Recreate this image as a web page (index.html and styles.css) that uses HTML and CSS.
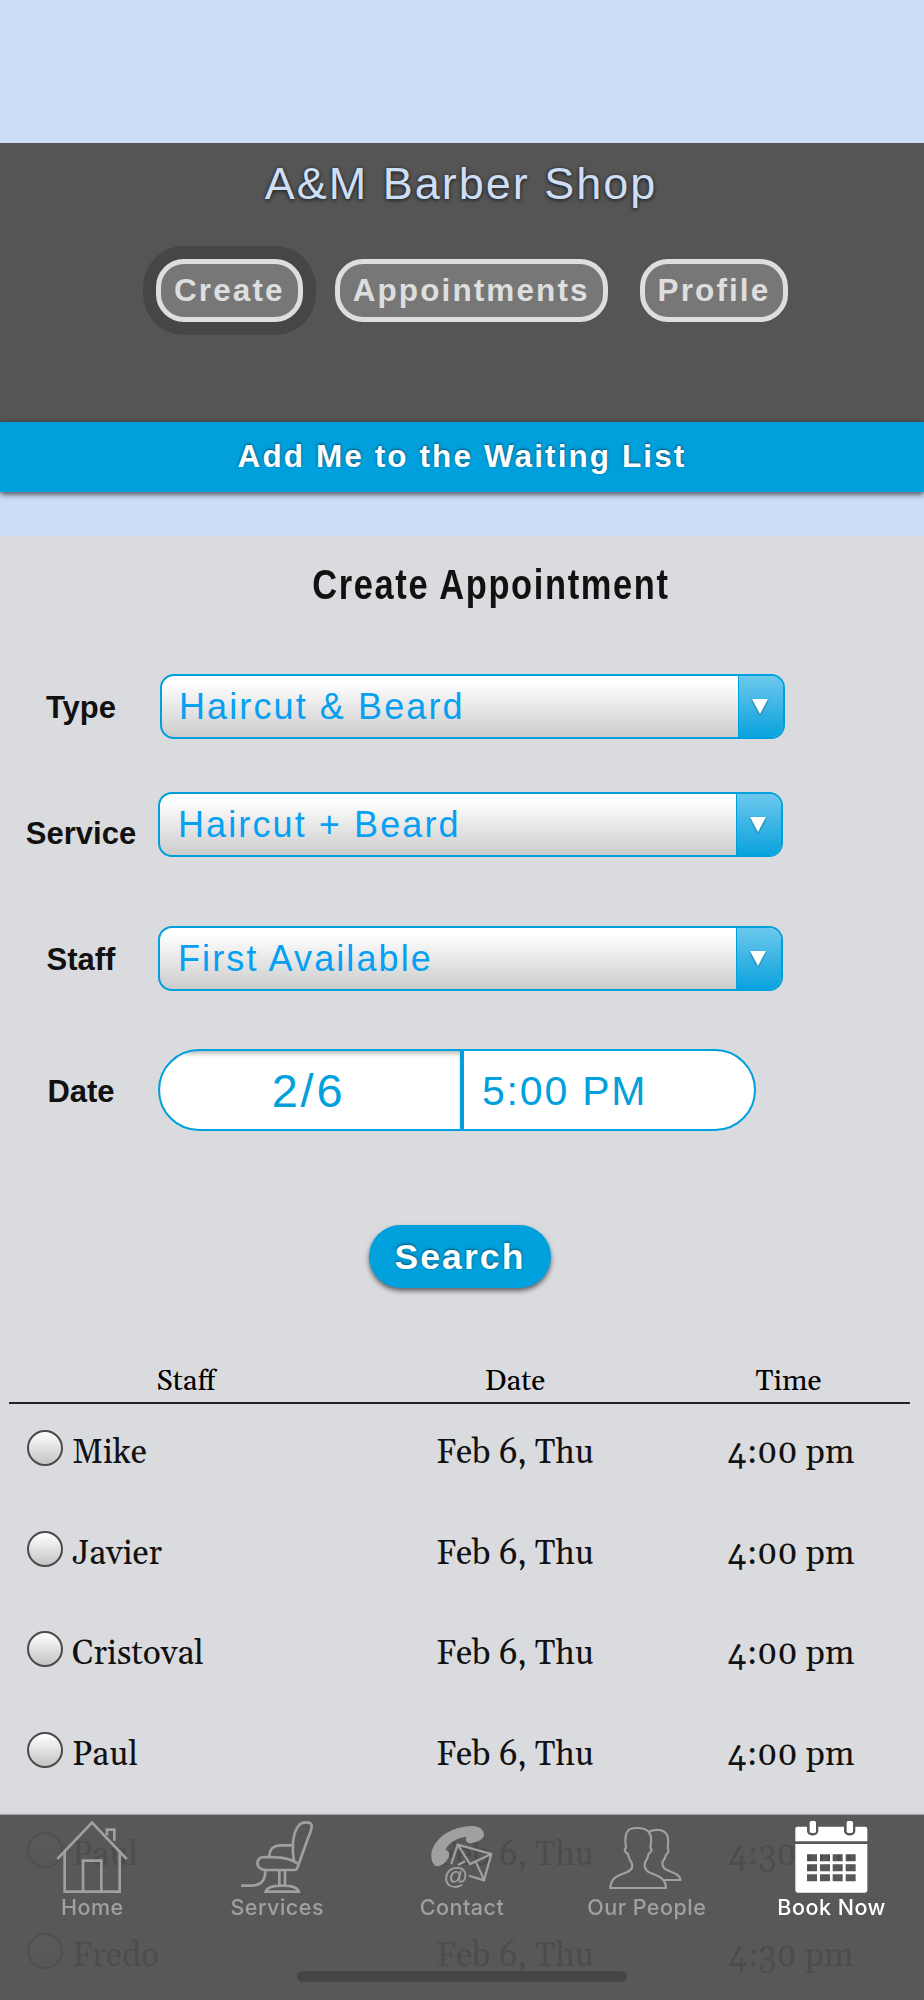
FILE: index.html
```html
<!DOCTYPE HTML>
<html>
<head>
<meta charset="utf-8">
<title>A&amp;M Barber Shop</title>
<meta name="viewport" content="width=device-width, initial-scale=1">
<link rel="stylesheet" href="styles.css">
</head>
<body>

<div class="header">
	<h1>A&amp;M Barber Shop</h1>
	<div class="nav">
		<a class="nav-btn active">Create</a>
		<a class="nav-btn">Appointments</a>
		<a class="nav-btn">Profile</a>
	</div>
</div>
<a class="waiting">Add Me to the Waiting List</a>

<div class="content">
	<h2><span>Create Appointment</span></h2>

	<div class="row type">
		<label>Type</label>
		<div class="select"><span>Haircut &amp; Beard</span><i><svg width="16" height="16" viewBox="0 0 16 16"><path d="M0 0H16L8 15Z" fill="#fff"/></svg></i></div>
	</div>
	<div class="row service">
		<label>Service</label>
		<div class="select"><span>Haircut + Beard</span><i><svg width="16" height="16" viewBox="0 0 16 16"><path d="M0 0H16L8 15Z" fill="#fff"/></svg></i></div>
	</div>
	<div class="row staff">
		<label>Staff</label>
		<div class="select"><span>First Available</span><i><svg width="16" height="16" viewBox="0 0 16 16"><path d="M0 0H16L8 15Z" fill="#fff"/></svg></i></div>
	</div>
	<div class="row date">
		<label>Date</label>
		<div class="pill"><span class="day">2/6</span><span class="time">5:00 PM</span></div>
	</div>

	<a class="search">Search</a>

	<div class="results">
		<div class="line head"><span>Staff</span><span>Date</span><span>Time</span></div>
		<div class="line"><span class="who"><b class="radio"></b>Mike</span><span>Feb 6, Thu</span><span>4:00 pm</span></div>
		<div class="line"><span class="who"><b class="radio"></b>Javier</span><span>Feb 6, Thu</span><span>4:00 pm</span></div>
		<div class="line"><span class="who"><b class="radio"></b>Cristoval</span><span>Feb 6, Thu</span><span>4:00 pm</span></div>
		<div class="line"><span class="who"><b class="radio"></b>Paul</span><span>Feb 6, Thu</span><span>4:00 pm</span></div>
		<div class="line"><span class="who"><b class="radio"></b>Paul</span><span>Feb 6, Thu</span><span>4:30 pm</span></div>
		<div class="line"><span class="who"><b class="radio"></b>Fredo</span><span>Feb 6, Thu</span><span>4:30 pm</span></div>
	</div>
</div>

<div class="tabbar">
	<a class="tab">
		<svg viewBox="163 57 228 228">
			<path d="M173 177L277 68L381 177M322 106V89H344V122M195 155V275H360V155M250 273V182H305V273"/>
		</svg>
		Home
	</a>
	<a class="tab">
		<svg viewBox="718 57 228 228">
			<path d="M883 186C877 150 877 103 896 78C907 64 933 64 936 76C937 84 932 98 926 112L893 204Q890 210 884 210H798C768 210 764 173 792 171C830 171 868 172 893 190M880 136H846C820 136 810 147 809 169M839 211V256M856 211V256M724 257H752C782 257 797 244 797 212M798 275C801 262 818 257 848 257C878 257 894 262 897 275Z"/>
		</svg>
		Services
	</a>
	<a class="tab">
		<svg viewBox="282 57 228 228">
			<path class="fill" d="M304 168C304 125 354 80 424 78C444 76 464 88 462 106C460 118 442 127 426 129C414 132 405 125 408 110C377 113 352 134 347 149C360 153 360 166 353 177C343 193 327 202 316 197C308 192 304 181 304 168Z"/>
			<path class="thin" d="M364 192L383 134L484 162L462 241L417 227M383 134L420 192L484 162M438 187L462 239M384 195L405 184"/>
			<text x="341" y="252">@</text>
		</svg>
		Contact
	</a>
	<a class="tab">
		<svg viewBox="26 57 228 228">
			<path class="thin" d="M30 264C31 232 55 226 79 217C98 210 98 197 93 187C86 178 85 168 82 161C74 158 70 148 77 143C67 77 100 85 113 84C132 84 162 90 150 143C157 148 152 158 145 161C143 171 140 179 134 187C131 200 134 212 149 218C175 229 196 234 197 264Z"/>
			<path class="thin" d="M146 95C169 84 191 91 198 101C206 113 204 130 202 145C207 150 204 160 197 164C195 174 191 179 187 184C184 198 188 205 200 210C222 219 239 224 240 240H192"/>
		</svg>
		Our People
	</a>
	<a class="tab on">
		<svg viewBox="581 57 228 228">
			<path class="fill" fill-rule="evenodd" d="M592 80H620V92C620 111 654 111 654 92V80H731V92C731 111 765 111 765 92V80H794Q801 80 801 87V124H585V87Q585 80 592 80ZM585 132H801V271Q801 278 794 278H592Q585 278 585 271ZM620 163V184H650V163ZM659 163V184H689V163ZM697 163V184H727V163ZM736 163V184H766V163ZM620 193V214H650V193ZM659 193V214H689V193ZM697 193V214H727V193ZM736 193V214H766V193ZM620 223V244H650V223ZM659 223V244H689V223ZM697 223V244H727V223ZM736 223V244H766V223Z"/>
			<rect class="fill" x="628" y="63" width="19" height="36" rx="5"/>
			<rect class="fill" x="739" y="63" width="19" height="36" rx="5"/>
		</svg>
		Book Now
	</a>
	<div class="home-bar"></div>
</div>

</body>
</html>
```
FILE: styles.css
```css
* {
	box-sizing: border-box;
}
body {
	margin: 0;
	padding-top: 143px;
	height: 2000px;
	overflow: hidden;
	background: #cddef7;
	color: #111;
	font-family: "Liberation Sans", Arial, sans-serif;
}

/* header */
.header {
	height: 279px;
	padding-top: 10px;
	background: #555;
	text-align: center;
}
h1 {
	margin: 0;
	padding-right: 2px;
	font-size: 45px;
	font-weight: normal;
	line-height: 61px;
	letter-spacing: 2px;
	color: #cddef7;
	text-shadow: 0 1px 4px rgba(0,0,0,.8);
}
.nav {
	display: flex;
	gap: 32px;
	margin: 45px 0 0 156px;
}
.nav-btn {
	height: 63px;
	padding: 0 13px;
	border: 5px solid #dedede;
	border-radius: 28px;
	background: #777;
	color: #dedede;
	font-size: 31.5px;
	font-weight: bold;
	line-height: 53px;
	letter-spacing: 2.1px;
}
.nav-btn.active {
	box-shadow: 0 0 0 13px #464646;
}
.waiting {
	display: block;
	position: relative;
	height: 70px;
	background: #00a0dd;
	box-shadow: 0 2px 6px rgba(0,0,0,.7);
	color: #fff;
	font-size: 31.5px;
	font-weight: bold;
	line-height: 69px;
	letter-spacing: 2.1px;
	text-align: center;
	text-shadow: 0 -1px 3px rgba(0,0,0,.5);
}

/* form */
.content {
	margin-top: 44px;
	padding-top: 16px;
	height: 1464px;
	background: #dadbdf;
}
h2 {
	margin: 0 0 58px 57px;
	font-size: 42px;
	line-height: 65px;
	height: 64px;
	letter-spacing: 2px;
	text-align: center;
}
h2 span {
	display: inline-block;
	transform: scaleX(.82);
}
.row {
	display: flex;
	height: 65px;
}
label {
	width: 158px;
	padding-left: 4px;
	font-size: 31px;
	font-weight: bold;
	line-height: 67px;
	text-align: center;
}
.select {
	display: flex;
	width: 625px;
	height: 65px;
	border: 2px solid #00a0dd;
	border-radius: 14px;
	background: linear-gradient(#fff 10%, #ccc);
	color: #06a0f2;
	font-size: 36px;
	line-height: 61px;
	letter-spacing: 2.1px;
	overflow: hidden;
}
.select span {
	flex: 1;
	padding-left: 18px;
}
.select i {
	width: 45px;
	padding: 23px 0 0 13px;
	border-left: 1px solid #00a0dd;
	background: linear-gradient(#6cc8ec, #0aa2de);
	line-height: 0;
}
.select svg {
	filter: drop-shadow(0 1px 1px rgba(0,0,0,.4));
}
.type .select {
	margin-left: 2px;
}
.type .select span {
	padding-left: 17px;
}
.service {
	margin: 53px 0 69px;
}
.service label {
	line-height: 83px;
}
.date {
	height: 82px;
	margin-top: 58px;
}
.date label {
	line-height: 85px;
}
.pill {
	display: flex;
	width: 598px;
	height: 82px;
	border: 2px solid #00a0dd;
	border-radius: 41px;
	background: #fff;
	color: #00a0dd;
	line-height: 80px;
	overflow: hidden;
}
.day {
	width: 304px;
	padding-right: 3px;
	border-right: 4px solid #00a0dd;
	box-shadow: inset 0 4px 4px -1px rgba(0,0,0,.25);
	font-size: 47px;
	letter-spacing: 2.8px;
	text-align: center;
}
.time {
	padding-left: 18px;
	font-size: 41px;
	letter-spacing: 1.8px;
}
.search {
	display: block;
	width: 182px;
	height: 63px;
	margin: 94px 0 0 369px;
	border-radius: 32px;
	background: #00a0dd;
	box-shadow: 0 3px 5px rgba(0,0,0,.55);
	color: #fff;
	font-size: 35.5px;
	font-weight: bold;
	line-height: 65px;
	letter-spacing: 2.1px;
	text-align: center;
	text-shadow: 0 -1px 3px rgba(0,0,0,.5);
}

/* results */
.results {
	margin: 72px 14px 0 9px;
	font-family: Georgia, Gelasio, "Liberation Serif", serif;
	font-size: 33.4px;
}
.line {
	display: grid;
	grid-template-columns: 354px 304px 243px;
	height: 100.5px;
	line-height: 98px;
	text-align: center;
}
.line span:last-child {
	padding-left: 5px;
}
.line.head {
	height: 44px;
	border-bottom: 2px solid #222;
	color: #000;
	font-size: 29px;
	line-height: 44px;
}
.line.head span:last-child {
	padding-left: 0;
}
.who {
	display: flex;
	padding-left: 18px;
}
.radio {
	width: 36px;
	height: 36px;
	margin: 26px 9px 0 0;
	border: 2px solid #4a4a4a;
	border-radius: 50%;
	background: linear-gradient(#fff, #c4c4c4);
}

/* bottom tabs */
.tabbar {
	display: flex;
	position: fixed;
	left: 0;
	right: 0;
	bottom: 0;
	height: 185px;
	padding-top: 4px;
	background: rgba(80,80,81,.94);
	box-shadow: 0 -1px 1px rgba(80,90,85,.4);
}
.tab {
	flex: 1;
	color: #a0a0a0;
	font-family: Inter, sans-serif;
	font-size: 21.5px;
	font-weight: 500;
	line-height: 24px;
	letter-spacing: .5px;
	text-align: center;
}
.tab svg {
	display: block;
	width: 76px;
	height: 76px;
	margin: 0 auto;
	fill: none;
	stroke: #a0a0a0;
	stroke-width: 8;
}
.tab svg .thin {
	stroke-width: 6.5;
}
.tab svg .fill {
	fill: #a0a0a0;
	stroke: none;
}
.tab text {
	fill: #a0a0a0;
	stroke: none;
	font: bold 74px "Liberation Sans", sans-serif;
	letter-spacing: 0;
}
.tab.on {
	color: #fff;
}
.tab.on svg .fill {
	fill: #fff;
}
.home-bar {
	position: absolute;
	left: 297px;
	bottom: 18px;
	width: 330px;
	height: 11px;
	border-radius: 6px;
	background: #464646;
}
```
